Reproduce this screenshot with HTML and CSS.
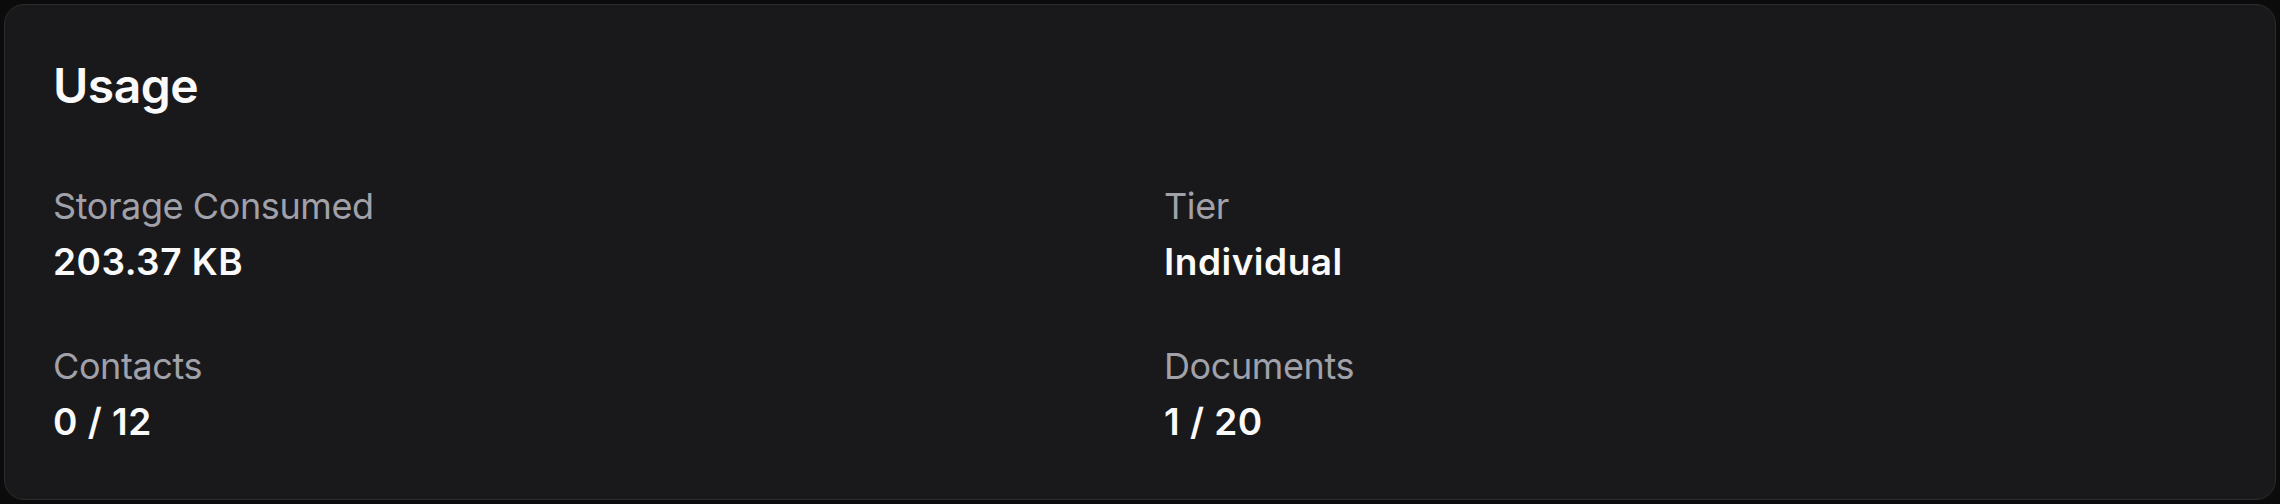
FILE: index.html
```html
<!DOCTYPE html>
<html lang="en">
<head>
<meta charset="utf-8">
<title>Usage</title>
<link rel="stylesheet" href="styles.css">
</head>
<body>
<section class="card">
  <h2 class="title">Usage</h2>
  <div class="grid">
    <div class="item">
      <div class="label">Storage Consumed</div>
      <div class="value">203.37 KB</div>
    </div>
    <div class="item">
      <div class="label">Tier</div>
      <div class="value">Individual</div>
    </div>
    <div class="item">
      <div class="label">Contacts</div>
      <div class="value">0 / 12</div>
    </div>
    <div class="item">
      <div class="label">Documents</div>
      <div class="value">1 / 20</div>
    </div>
  </div>
</section>
</body>
</html>
```

FILE: styles.css
```css
html, body {
  margin: 0;
  padding: 0;
  background: #0b0b0c;
}
body {
  padding: 4px;
  box-sizing: border-box;
  height: 100vh;
  font-family: "Inter", "Liberation Sans", sans-serif;
}
.card {
  box-sizing: border-box;
  height: 100%;
  background: #19191b;
  border: 1px solid #2c2c2f;
  border-radius: 20px;
  padding: 53px 48px 48px;
}
.title {
  margin: 0;
  font-size: 48px;
  line-height: 56px;
  font-weight: 600;
  color: #fafafa;
  letter-spacing: -0.5px;
}
.grid {
  margin-top: 64px;
  display: grid;
  grid-template-columns: 1fr 1fr;
  column-gap: 48px;
  row-gap: 48px;
}
.label {
  font-size: 36px;
  line-height: 56px;
  color: #a1a1aa;
  letter-spacing: -0.4px;
}
.value {
  font-size: 37px;
  line-height: 56px;
  font-weight: 600;
  color: #fafafa;
  letter-spacing: 0.5px;
}
```
